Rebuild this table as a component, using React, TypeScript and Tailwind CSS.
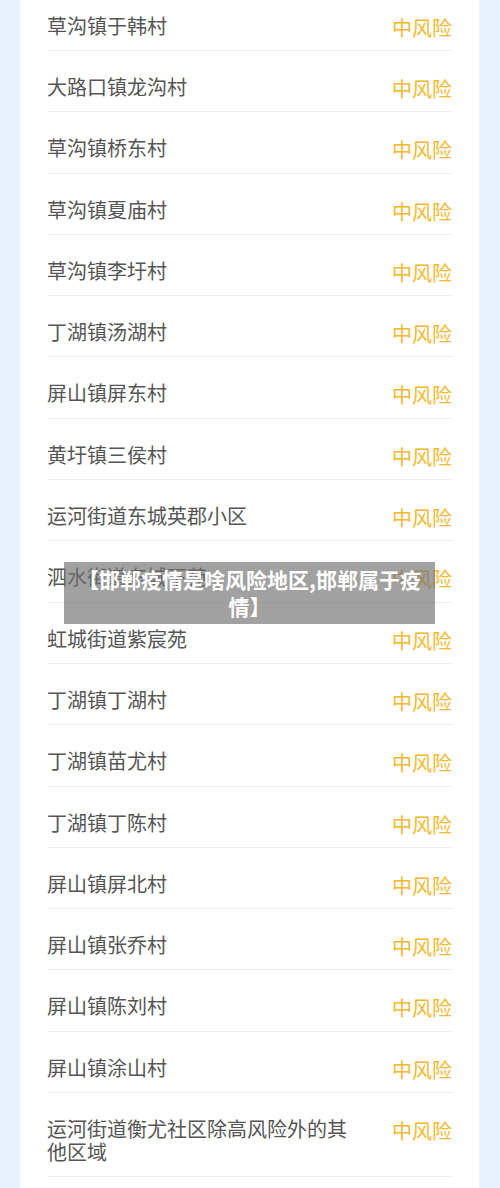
const rows = [
  '草沟镇于韩村',
  '大路口镇龙沟村',
  '草沟镇桥东村',
  '草沟镇夏庙村',
  '草沟镇李圩村',
  '丁湖镇汤湖村',
  '屏山镇屏东村',
  '黄圩镇三侯村',
  '运河街道东城英郡小区',
  '泗水街道东城下苑',
  '虹城街道紫宸苑',
  '丁湖镇丁湖村',
  '丁湖镇苗尤村',
  '丁湖镇丁陈村',
  '屏山镇屏北村',
  '屏山镇张乔村',
  '屏山镇陈刘村',
  '屏山镇涂山村',
  '运河街道衡尤社区除高风险外的其他区域',
]

export default function App() {
  return (
    <div
      className="relative h-[1188px] overflow-hidden bg-[#e7f1fb]"
      style={{ fontFamily: '"Noto Sans CJK SC", "Noto Sans", sans-serif' }}
    >
      <div className="ml-[20px] w-[459px] bg-white px-[27px] pb-[40px] mt-[-10.3px]">
        {rows.map(name => (
          <div
            key={name}
            className="flex items-start justify-between border-b border-[#ececec] pt-[24px] pb-[13.3px]"
          >
            <span className="max-w-[306px] text-[20px] leading-[23px] text-[#555555]">{name}</span>
            <span className="relative top-[2px] text-[20px] leading-[23px] text-[#f4b82e]">中风险</span>
          </div>
        ))}
      </div>

      <div className="absolute left-[64px] top-[562px] w-[371px] h-[62px] bg-[rgba(110,110,110,0.65)] px-[8px] py-[4px] text-center text-[21px] leading-[27px] font-bold text-white">
        【邯郸疫情是啥风险地区,邯郸属于疫情】
      </div>
    </div>
  )
}
